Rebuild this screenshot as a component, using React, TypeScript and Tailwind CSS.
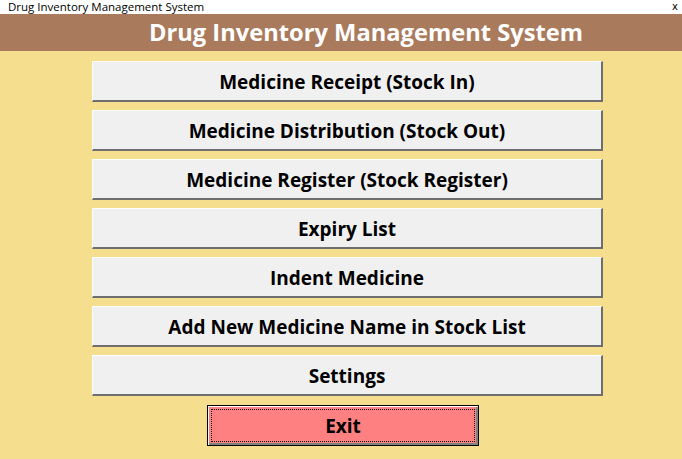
const MENU_ITEMS: string[] = [
  "Medicine Receipt (Stock In)",
  "Medicine Distribution (Stock Out)",
  "Medicine Register (Stock Register)",
  "Expiry List",
  "Indent Medicine",
  "Add New Medicine Name in Stock List",
  "Settings",
];

function MenuButton({ title }: { title: string }) {
  return (
    <button className="w-[511px] h-[41px] pt-[2px] bg-[#f0f0f0] border-t border-l border-t-white border-l-white border-b-2 border-r-2 border-b-[#6e6e6e] border-r-[#6e6e6e] text-black text-[19px] font-bold font-['Open_Sans',sans-serif]">
      {title}
    </button>
  );
}

export default function App() {
  return (
    <div className="w-[682px] h-[459px] flex flex-col bg-[#f5df8f] overflow-hidden">
      <div className="h-[14px] bg-white flex items-center justify-between pl-2 pr-[4px]">
        <span className="text-[11.5px] leading-[14px] text-black font-['Open_Sans',sans-serif]">
          Drug Inventory Management System
        </span>
        <span className="text-[10px] leading-[14px] text-black font-['DejaVu_Sans',sans-serif]">
          x
        </span>
      </div>
      <div className="h-[37px] bg-[#aa7a5d] flex items-center justify-center pl-[50px]">
        <h1 className="text-white text-[23.7px] font-bold font-['Open_Sans',sans-serif] leading-none">
          Drug Inventory Management System
        </h1>
      </div>
      <div className="flex flex-col pt-[10px] gap-2 pl-[92px]">
        {MENU_ITEMS.map((item) => (
          <MenuButton key={item} title={item} />
        ))}
        <div className="pl-[115px] pt-[1px]">
          <button className="w-[272px] h-[41px] bg-[#ff8080] border border-black shadow-[inset_1px_1px_0_#ffffff,inset_-2px_-2px_0_#808080] p-[3px] font-['Open_Sans',sans-serif] font-bold text-[19px] text-black">
            <div className="w-full h-full pt-[2px] border border-dotted border-black flex items-center justify-center">
              Exit
            </div>
          </button>
        </div>
      </div>
    </div>
  );
}
